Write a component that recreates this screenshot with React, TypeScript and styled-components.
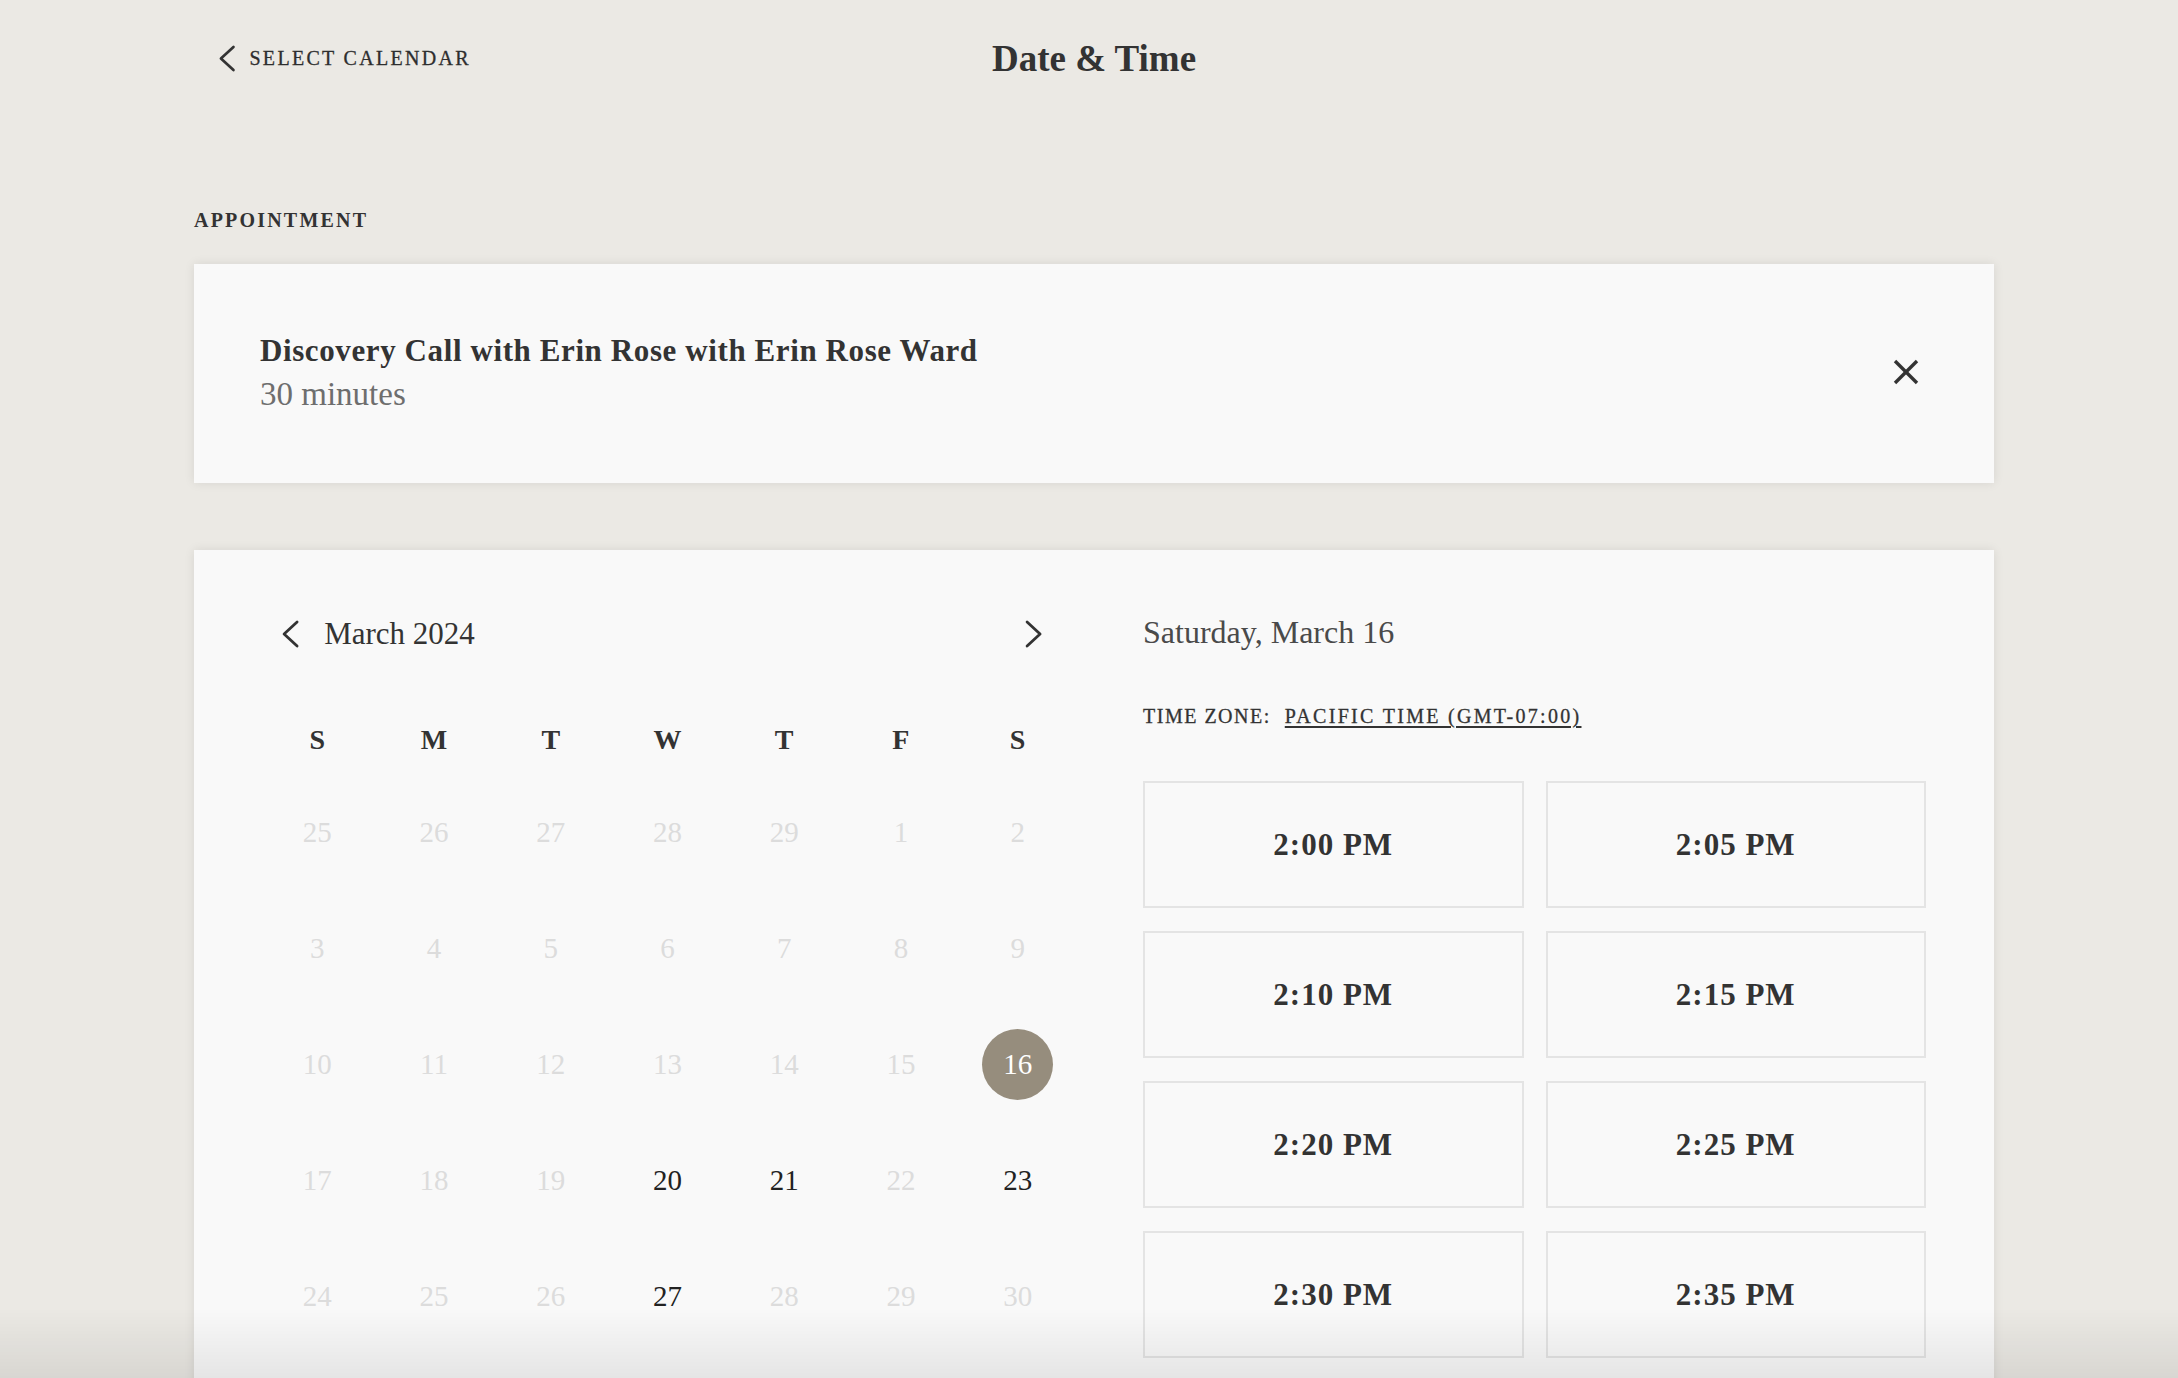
import styled, { createGlobalStyle } from "styled-components";

const GlobalStyle = createGlobalStyle`
  html, body {
    margin: 0;
    padding: 0;
    overflow: hidden;
    background: #ebe9e4;
    font-family: "Liberation Serif", "Times New Roman", serif;
    color: #333;
  }
  * {
    box-sizing: border-box;
  }
`;

type DayState = "disabled" | "available" | "selected";

const weeks: { day: number; state: DayState }[][] = [
  [25, 26, 27, 28, 29, 1, 2].map((d) => ({ day: d, state: "disabled" as DayState })),
  [3, 4, 5, 6, 7, 8, 9].map((d) => ({ day: d, state: "disabled" as DayState })),
  [10, 11, 12, 13, 14, 15, 16].map((d) => ({
    day: d,
    state: (d === 16 ? "selected" : "disabled") as DayState,
  })),
  [17, 18, 19, 20, 21, 22, 23].map((d) => ({
    day: d,
    state: ([20, 21, 23].includes(d) ? "available" : "disabled") as DayState,
  })),
  [24, 25, 26, 27, 28, 29, 30].map((d) => ({
    day: d,
    state: (d === 27 ? "available" : "disabled") as DayState,
  })),
];

const weekdays = ["S", "M", "T", "W", "T", "F", "S"];

const slots = [
  "2:00 PM",
  "2:05 PM",
  "2:10 PM",
  "2:15 PM",
  "2:20 PM",
  "2:25 PM",
  "2:30 PM",
  "2:35 PM",
];

function ChevronLeft({ size = 28 }: { size?: number }) {
  return (
    <svg width={size * 0.72} height={size} viewBox="0 0 20 28" fill="none">
      <polyline
        points="17,2 4,14 17,26"
        stroke="#333"
        strokeWidth="2.8"
        strokeLinecap="round"
        strokeLinejoin="round"
      />
    </svg>
  );
}

function ChevronRight({ size = 28 }: { size?: number }) {
  return (
    <svg width={size * 0.72} height={size} viewBox="0 0 20 28" fill="none">
      <polyline
        points="3,2 16,14 3,26"
        stroke="#333"
        strokeWidth="2.8"
        strokeLinecap="round"
        strokeLinejoin="round"
      />
    </svg>
  );
}

export default function App() {
  return (
    <>
      <GlobalStyle />
      <Page>
        <Header>
          <BackLink>
            <ChevronLeft size={27} />
            <span>SELECT CALENDAR</span>
          </BackLink>
          <PageTitle>Date &amp; Time</PageTitle>
          <div />
        </Header>

        <SectionLabel>APPOINTMENT</SectionLabel>

        <AppointmentCard>
          <AppointmentInfo>
            <AppointmentTitle>
              Discovery Call with Erin Rose with Erin Rose Ward
            </AppointmentTitle>
            <AppointmentMeta>30 minutes</AppointmentMeta>
          </AppointmentInfo>
          <CloseButton aria-label="Remove appointment">
            <svg width="26" height="26" viewBox="0 0 26 26">
              <line x1="2" y1="2" x2="24" y2="24" stroke="#333" strokeWidth="3.4" />
              <line x1="24" y1="2" x2="2" y2="24" stroke="#333" strokeWidth="3.4" />
            </svg>
          </CloseButton>
        </AppointmentCard>

        <CalendarCard>
          <CalendarColumn>
            <MonthNav>
              <MonthGroup>
                <NavButton>
                  <ChevronLeft />
                </NavButton>
                <MonthLabel>March 2024</MonthLabel>
              </MonthGroup>
              <NavButton>
                <ChevronRight />
              </NavButton>
            </MonthNav>

            <WeekGrid>
              {weekdays.map((w, i) => (
                <WeekdayCell key={i}>{w}</WeekdayCell>
              ))}
            </WeekGrid>

            {weeks.map((week, wi) => (
              <DayGrid key={wi}>
                {week.map((d, di) => (
                  <DayCell key={di}>
                    <DayNumber $state={d.state}>{d.day}</DayNumber>
                  </DayCell>
                ))}
              </DayGrid>
            ))}
          </CalendarColumn>

          <SlotsColumn>
            <SelectedDate>Saturday, March 16</SelectedDate>
            <TimeZoneRow>
              <TimeZoneLabel>TIME ZONE:</TimeZoneLabel>
              <TimeZoneLink>PACIFIC TIME (GMT-07:00)</TimeZoneLink>
            </TimeZoneRow>
            <SlotGrid>
              {slots.map((s) => (
                <Slot key={s}>{s}</Slot>
              ))}
            </SlotGrid>
          </SlotsColumn>
        </CalendarCard>
      </Page>
      <BottomFade />
    </>
  );
}

const Page = styled.div`
  padding: 0 184px 0 194px;
`;

const Header = styled.header`
  display: grid;
  grid-template-columns: 1fr auto 1fr;
  align-items: center;
  height: 116px;
`;

const BackLink = styled.a`
  display: flex;
  align-items: center;
  gap: 13px;
  margin-left: 23px;
  font-size: 20px;
  letter-spacing: 2.3px;
  color: #2e2e2e;
  cursor: pointer;
  -webkit-text-stroke: 0.3px #2e2e2e;
`;

const PageTitle = styled.h1`
  margin: 0;
  font-size: 37px;
  font-weight: 700;
  color: #333;
`;

const SectionLabel = styled.div`
  margin-top: 92px;
  font-size: 20px;
  line-height: 24px;
  letter-spacing: 2.2px;
  font-weight: 700;
  color: #333;
`;

const Card = styled.div`
  background: #f9f9f9;
  box-shadow: 0 0 10px rgba(0, 0, 0, 0.09);
`;

const AppointmentCard = styled(Card)`
  margin-top: 32px;
  height: 219px;
  display: flex;
  align-items: center;
  justify-content: space-between;
  padding: 0 75px 0 66px;
`;

const AppointmentInfo = styled.div`
  display: flex;
  flex-direction: column;
`;

const AppointmentTitle = styled.div`
  font-size: 31px;
  line-height: 36px;
  font-weight: 700;
  letter-spacing: 0.6px;
  color: #333;
`;

const AppointmentMeta = styled.div`
  margin-top: 5px;
  font-size: 33px;
  line-height: 40px;
  color: #6e6e6e;
`;

const CloseButton = styled.button`
  display: flex;
  padding: 0;
  margin-top: -4px;
  border: none;
  background: none;
  cursor: pointer;
`;

const CalendarCard = styled(Card)`
  margin-top: 67px;
  display: grid;
  grid-template-columns: 817px 1fr;
  gap: 67px;
  padding: 56px 68px 120px 65px;
`;

const CalendarColumn = styled.div`
  display: flex;
  flex-direction: column;
`;

const MonthNav = styled.div`
  display: flex;
  align-items: center;
  justify-content: space-between;
  height: 56px;
  padding: 0 32px 0 21px;
`;

const MonthGroup = styled.div`
  display: flex;
  align-items: center;
  gap: 24px;
`;

const NavButton = styled.button`
  display: flex;
  padding: 0;
  border: none;
  background: none;
  cursor: pointer;
`;

const MonthLabel = styled.span`
  font-size: 31px;
  color: #333;
`;

const WeekGrid = styled.div`
  display: grid;
  grid-template-columns: repeat(7, 1fr);
  height: 69px;
  margin-top: 43px;
`;

const WeekdayCell = styled.div`
  display: flex;
  align-items: center;
  justify-content: center;
  font-size: 28px;
  font-weight: 700;
  color: #333;
`;

const DayGrid = styled.div`
  display: grid;
  grid-template-columns: repeat(7, 1fr);
  height: 116px;
`;

const DayCell = styled.div`
  display: flex;
  align-items: center;
  justify-content: center;
`;

const DayNumber = styled.span<{ $state: DayState }>`
  display: flex;
  align-items: center;
  justify-content: center;
  width: 71px;
  height: 71px;
  border-radius: 50%;
  font-size: 29px;
  color: ${(p) =>
    p.$state === "disabled" ? "#dcdcdc" : p.$state === "selected" ? "#ffffff" : "#222"};
  background: ${(p) => (p.$state === "selected" ? "#968d7d" : "transparent")};
  cursor: ${(p) => (p.$state === "disabled" ? "default" : "pointer")};
`;

const SlotsColumn = styled.div`
  display: flex;
  flex-direction: column;
`;

const SelectedDate = styled.div`
  margin-top: 6px;
  font-size: 32px;
  line-height: 40px;
  color: #4a4a4a;
`;

const TimeZoneRow = styled.div`
  display: flex;
  align-items: baseline;
  gap: 14px;
  margin-top: 52px;
  font-size: 20px;
  line-height: 24px;
  letter-spacing: 1.5px;
  color: #333;
  -webkit-text-stroke: 0.3px #333;
`;

const TimeZoneLabel = styled.span``;

const TimeZoneLink = styled.a`
  letter-spacing: 2.3px;
  text-decoration: underline;
  text-underline-offset: 3px;
  text-decoration-thickness: 1.5px;
  cursor: pointer;
`;

const SlotGrid = styled.div`
  display: grid;
  grid-template-columns: 1fr 1fr;
  column-gap: 22px;
  row-gap: 23px;
  margin-top: 53px;
`;

const Slot = styled.button`
  height: 127px;
  border: 2px solid #e4e4e4;
  background: transparent;
  font-family: inherit;
  font-size: 31px;
  font-weight: 700;
  letter-spacing: 1px;
  color: #333;
  cursor: pointer;
`;

const BottomFade = styled.div`
  position: fixed;
  left: 0;
  right: 0;
  bottom: 0;
  height: 70px;
  pointer-events: none;
  background: linear-gradient(to bottom, rgba(0, 0, 0, 0), rgba(0, 0, 0, 0.08));
`;
